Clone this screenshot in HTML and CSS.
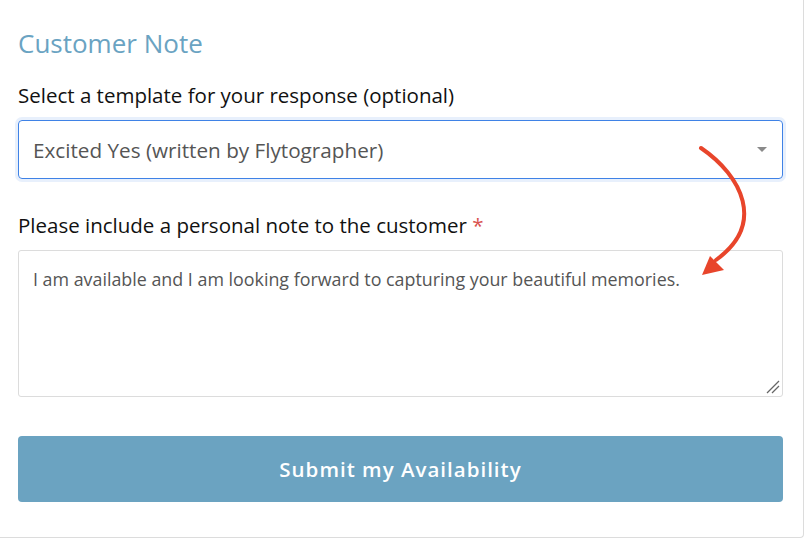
FILE: index.html
```html
<!DOCTYPE html>
<html>
<head>
<meta charset="utf-8">
<link rel="stylesheet" href="styles.css">
</head>
<body>
<div class="card">
  <h2 class="title">Customer Note</h2>
  <div class="label label-select">Select a template for your response (optional)</div>
  <div class="select">
    <span class="select-value">Excited Yes (written by Flytographer)</span>
    <span class="caret"></span>
  </div>
  <div class="label label-note">Please include a personal note to the customer <span class="req">*</span></div>
  <div class="note-wrap">
    <textarea class="note" readonly>I am available and I am looking forward to capturing your beautiful memories.</textarea>
    <svg class="grip" width="16" height="16" viewBox="0 0 16 16">
      <line x1="2" y1="14" x2="14" y2="2" stroke="#666" stroke-width="1.3"/>
      <line x1="7" y1="14" x2="14" y2="7" stroke="#666" stroke-width="1.3"/>
    </svg>
  </div>
  <button class="submit">Submit my Availability</button>
  <svg class="arrow" width="804" height="539" viewBox="0 0 804 539">
    <path d="M701 148 C 742 176, 766 224, 716 260" fill="none" stroke="#e8452b" stroke-width="4" stroke-linecap="round"/>
    <polygon points="702,275 710,256 724,270" fill="#e8452b"/>
  </svg>
</div>
</body>
</html>
```
FILE: styles.css
```css
html, body {
  margin: 0;
  padding: 0;
  background: #fff;
}
body {
  font-family: "Open Sans", Lato, sans-serif;
}
.card {
  position: relative;
  box-sizing: border-box;
  width: 804px;
  height: 538px;
  padding: 28px 20px 0 18px;
  border-right: 1px solid #dcdcdc;
  border-bottom: 1px solid #dcdcdc;
  border-bottom-right-radius: 4px;
  display: flex;
  flex-direction: column;
}
.title {
  margin: 0;
  font-size: 26px;
  line-height: 30px;
  font-weight: 500;
  color: #6aa3c2;
}
.label {
  font-size: 20.5px;
  line-height: 24px;
  color: #111;
}
.label-select {
  margin-top: 25px;
}
.label-note {
  margin-top: 34px;
}
.req {
  color: #d9534f;
}
.select {
  margin-top: 13px;
  box-sizing: border-box;
  height: 59px;
  border: 1px solid #3f82e6;
  border-radius: 4px;
  box-shadow: 0 0 0 3px #e8f0fc;
  display: flex;
  align-items: center;
  justify-content: space-between;
  padding: 0 15px 0 14px;
}
.select-value {
  font-size: 20.7px;
  color: #555;
}
.caret {
  width: 0;
  height: 0;
  border-left: 5px solid transparent;
  border-right: 5px solid transparent;
  border-top: 5px solid #8a8a8a;
}
.note-wrap {
  position: relative;
  margin-top: 13px;
  height: 147px;
}
.note {
  display: block;
  box-sizing: border-box;
  width: 100%;
  height: 147px;
  margin: 0;
  border: 1px solid #dcdcdc;
  border-radius: 3px;
  padding: 17px 14px;
  font-family: "Open Sans", Lato, sans-serif;
  font-size: 17.85px;
  line-height: 22px;
  color: #555;
  outline: none;
  resize: none;
}
.grip {
  position: absolute;
  right: 2px;
  bottom: 2px;
}
.submit {
  margin-top: 39px;
  height: 66px;
  border: none;
  border-radius: 4px;
  background: #6ba3c1;
  color: #fff;
  font-family: "Open Sans", Lato, sans-serif;
  font-size: 20.5px;
  font-weight: 600;
  letter-spacing: 1px;
}
.arrow {
  position: absolute;
  left: 0;
  top: 0;
  pointer-events: none;
}
```
